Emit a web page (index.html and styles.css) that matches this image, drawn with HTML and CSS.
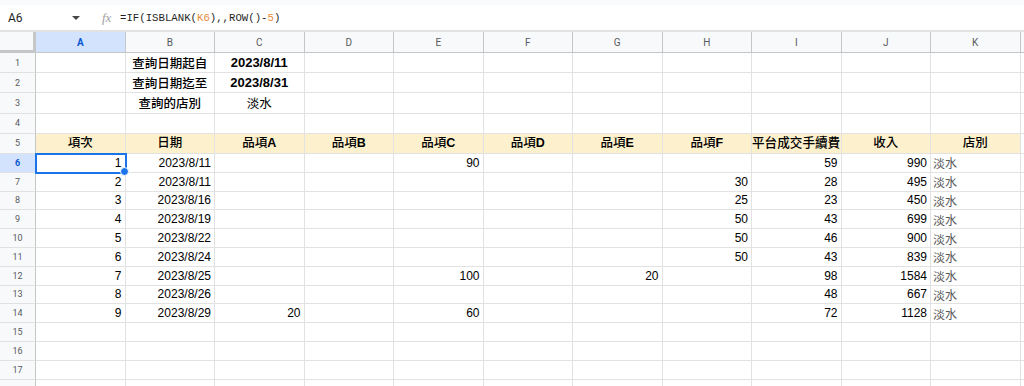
FILE: index.html
```html
<!DOCTYPE html>
<html lang="zh-Hant">
<head>
<meta charset="utf-8">
<title>Sheet</title>
<link rel="stylesheet" href="styles.css">
</head>
<body>
<div class="app">
  <div class="topstrip"></div>
  <div class="fbar">
    <div class="namebox"><span class="ref">A6</span><span class="caret"></span></div>
    <div class="fx">fx</div>
    <div class="formula">=IF(ISBLANK(<span class="f-ref">K6</span>),,ROW()-<span class="f-num">5</span>)</div>
  </div>
  <div class="sheet">
    <div class="row hdr">
      <div class="corner"></div>
      <div class="ch sel">A</div><div class="ch">B</div><div class="ch">C</div><div class="ch">D</div><div class="ch">E</div><div class="ch">F</div><div class="ch">G</div><div class="ch">H</div><div class="ch">I</div><div class="ch">J</div><div class="ch">K</div><div class="ch fill"></div>
    </div>
    <div class="row tall">
      <div class="rh">1</div>
      <div class="c"></div><div class="c ctr">查詢日期起自</div><div class="c ctr b">2023/8/11</div><div class="c"></div><div class="c"></div><div class="c"></div><div class="c"></div><div class="c"></div><div class="c"></div><div class="c"></div><div class="c"></div><div class="c fill"></div>
    </div>
    <div class="row tall">
      <div class="rh">2</div>
      <div class="c"></div><div class="c ctr">查詢日期迄至</div><div class="c ctr b">2023/8/31</div><div class="c"></div><div class="c"></div><div class="c"></div><div class="c"></div><div class="c"></div><div class="c"></div><div class="c"></div><div class="c"></div><div class="c fill"></div>
    </div>
    <div class="row tall">
      <div class="rh">3</div>
      <div class="c"></div><div class="c ctr">查詢的店別</div><div class="c ctr reg">淡水</div><div class="c"></div><div class="c"></div><div class="c"></div><div class="c"></div><div class="c"></div><div class="c"></div><div class="c"></div><div class="c"></div><div class="c fill"></div>
    </div>
    <div class="row tall">
      <div class="rh">4</div>
      <div class="c"></div><div class="c"></div><div class="c"></div><div class="c"></div><div class="c"></div><div class="c"></div><div class="c"></div><div class="c"></div><div class="c"></div><div class="c"></div><div class="c"></div><div class="c fill"></div>
    </div>
    <div class="row tall head5">
      <div class="rh">5</div>
      <div class="c h">項次</div><div class="c h">日期</div><div class="c h">品項<span class="lat">A</span></div><div class="c h">品項<span class="lat">B</span></div><div class="c h">品項<span class="lat">C</span></div><div class="c h">品項<span class="lat">D</span></div><div class="c h">品項<span class="lat">E</span></div><div class="c h">品項<span class="lat">F</span></div><div class="c h nowrap">平台成交手續費</div><div class="c h">收入</div><div class="c h">店別</div><div class="c fill"></div>
    </div>
    <div class="row">
      <div class="rh sel">6</div>
      <div class="c num active">1<span class="handle"></span></div><div class="c num">2023/8/11</div><div class="c"></div><div class="c"></div><div class="c num">90</div><div class="c"></div><div class="c"></div><div class="c"></div><div class="c num">59</div><div class="c num">990</div><div class="c store">淡水</div><div class="c fill"></div>
    </div>
    <div class="row">
      <div class="rh">7</div>
      <div class="c num">2</div><div class="c num">2023/8/11</div><div class="c"></div><div class="c"></div><div class="c"></div><div class="c"></div><div class="c"></div><div class="c num">30</div><div class="c num">28</div><div class="c num">495</div><div class="c store">淡水</div><div class="c fill"></div>
    </div>
    <div class="row">
      <div class="rh">8</div>
      <div class="c num">3</div><div class="c num">2023/8/16</div><div class="c"></div><div class="c"></div><div class="c"></div><div class="c"></div><div class="c"></div><div class="c num">25</div><div class="c num">23</div><div class="c num">450</div><div class="c store">淡水</div><div class="c fill"></div>
    </div>
    <div class="row">
      <div class="rh">9</div>
      <div class="c num">4</div><div class="c num">2023/8/19</div><div class="c"></div><div class="c"></div><div class="c"></div><div class="c"></div><div class="c"></div><div class="c num">50</div><div class="c num">43</div><div class="c num">699</div><div class="c store">淡水</div><div class="c fill"></div>
    </div>
    <div class="row">
      <div class="rh">10</div>
      <div class="c num">5</div><div class="c num">2023/8/22</div><div class="c"></div><div class="c"></div><div class="c"></div><div class="c"></div><div class="c"></div><div class="c num">50</div><div class="c num">46</div><div class="c num">900</div><div class="c store">淡水</div><div class="c fill"></div>
    </div>
    <div class="row">
      <div class="rh">11</div>
      <div class="c num">6</div><div class="c num">2023/8/24</div><div class="c"></div><div class="c"></div><div class="c"></div><div class="c"></div><div class="c"></div><div class="c num">50</div><div class="c num">43</div><div class="c num">839</div><div class="c store">淡水</div><div class="c fill"></div>
    </div>
    <div class="row">
      <div class="rh">12</div>
      <div class="c num">7</div><div class="c num">2023/8/25</div><div class="c"></div><div class="c"></div><div class="c num">100</div><div class="c"></div><div class="c num">20</div><div class="c"></div><div class="c num">98</div><div class="c num">1584</div><div class="c store">淡水</div><div class="c fill"></div>
    </div>
    <div class="row">
      <div class="rh">13</div>
      <div class="c num">8</div><div class="c num">2023/8/26</div><div class="c"></div><div class="c"></div><div class="c"></div><div class="c"></div><div class="c"></div><div class="c"></div><div class="c num">48</div><div class="c num">667</div><div class="c store">淡水</div><div class="c fill"></div>
    </div>
    <div class="row">
      <div class="rh">14</div>
      <div class="c num">9</div><div class="c num">2023/8/29</div><div class="c num">20</div><div class="c"></div><div class="c num">60</div><div class="c"></div><div class="c"></div><div class="c"></div><div class="c num">72</div><div class="c num">1128</div><div class="c store">淡水</div><div class="c fill"></div>
    </div>
    <div class="row">
      <div class="rh">15</div>
      <div class="c"></div><div class="c"></div><div class="c"></div><div class="c"></div><div class="c"></div><div class="c"></div><div class="c"></div><div class="c"></div><div class="c"></div><div class="c"></div><div class="c"></div><div class="c fill"></div>
    </div>
    <div class="row">
      <div class="rh">16</div>
      <div class="c"></div><div class="c"></div><div class="c"></div><div class="c"></div><div class="c"></div><div class="c"></div><div class="c"></div><div class="c"></div><div class="c"></div><div class="c"></div><div class="c"></div><div class="c fill"></div>
    </div>
    <div class="row">
      <div class="rh">17</div>
      <div class="c"></div><div class="c"></div><div class="c"></div><div class="c"></div><div class="c"></div><div class="c"></div><div class="c"></div><div class="c"></div><div class="c"></div><div class="c"></div><div class="c"></div><div class="c fill"></div>
    </div>
    <div class="row">
      <div class="rh"></div>
      <div class="c"></div><div class="c"></div><div class="c"></div><div class="c"></div><div class="c"></div><div class="c"></div><div class="c"></div><div class="c"></div><div class="c"></div><div class="c"></div><div class="c"></div><div class="c fill"></div>
    </div>
  </div>
</div>
</body>
</html>
```

FILE: styles.css
```css
* { box-sizing: border-box; }
html, body { margin: 0; padding: 0; background: #fff; }
body {
  width: 1024px;
  height: 386px;
  overflow: hidden;
  font-family: Arial, "Liberation Sans", "Noto Sans CJK TC", sans-serif;
  color: #000;
}
.app { display: flex; flex-direction: column; }
.topstrip { height: 5px; background: #f9fbfd; }
.fbar {
  height: 27px;
  display: flex;
  align-items: center;
  border-bottom: 2px solid #e1e3e1;
  background: #fff;
}
.namebox {
  width: 90px;
  display: flex;
  align-items: center;
  padding-left: 8px;
  font-family: Roboto, "Liberation Sans", sans-serif;
  font-size: 12px;
  color: #1f1f1f;
}
.namebox .ref { flex: 1; }
.caret {
  width: 0; height: 0;
  border-left: 4px solid transparent;
  border-right: 4px solid transparent;
  border-top: 4px solid #444746;
  margin-right: 10px;
}
.fx {
  width: 30px;
  padding-left: 12px;
  font-family: "Liberation Serif", serif;
  font-style: italic;
  font-size: 13px;
  color: #a0a0a0;
}
.formula {
  font-family: "Liberation Mono", monospace;
  font-size: 10.7px;
  color: #1f1f1f;
}
.f-ref { color: #e98a3c; }
.f-num { color: #e98a3c; }

.sheet { display: flex; flex-direction: column; }
.row {
  display: grid;
  grid-template-columns: 36px repeat(11, 89.5px) 1fr;
  height: 18.8px;
}
.row.hdr { height: 21px; }
.row.tall { height: 20.2px; }

.corner {
  background: #f8f9fa;
  border-right: 3px solid #c4c7c5;
  border-bottom: 3px solid #c4c7c5;
}
.ch {
  background: #f8f9fa;
  border-right: 1px solid #c4c7c5;
  border-bottom: 1px solid #c4c7c5;
  font-family: Roboto, "Liberation Sans", sans-serif;
  font-size: 10px;
  color: #575a5e;
  display: flex;
  align-items: center;
  justify-content: center;
}
.ch.sel { background: #d3e3fd; color: #0b57d0; font-weight: 700; }
.ch.fill { border-right: none; }

.rh {
  background: #f8f9fa;
  border-right: 1px solid #c4c7c5;
  border-bottom: 1px solid #e1e1e1;
  font-family: Roboto, "Liberation Sans", sans-serif;
  font-size: 9px;
  color: #575a5e;
  display: flex;
  align-items: center;
  justify-content: center;
}
.rh.sel { background: #d3e3fd; color: #0b57d0; font-weight: 700; }

.c {
  position: relative;
  border-right: 1px solid #e2e2e2;
  border-bottom: 1px solid #e2e2e2;
  font-size: 12px;
  display: flex;
  align-items: center;
  padding: 0 3px;
  white-space: nowrap;
  overflow: hidden;
}
.c.fill { border-right: none; }
.c.ctr { justify-content: center; font-size: 12.5px; font-weight: 500; }
.c.reg { font-weight: 400; }
.c.b { font-weight: 700; font-size: 13px; }
.c.num { justify-content: flex-end; font-size: 12px; }
.c.store { color: #5a5a5a; font-size: 12px; padding-left: 2px; }

.head5 .c { background: #fdf0cc; }
.head5 .c.fill { background: #fff; }
.c.h {
  display: block;
  text-align: center;
  line-height: 19.2px;
  font-size: 12.5px;
  font-weight: 500;
}
.c.h .lat { font-weight: 700; }
.c.nowrap { padding: 0; text-align: left; font-size: 12.6px; }

.c.active {
  overflow: visible;
  outline: 2px solid #1a73e8;
  outline-offset: -1px;
  z-index: 2;
}
.handle {
  position: absolute;
  right: -4px;
  bottom: -4px;
  width: 7px;
  height: 7px;
  border-radius: 50%;
  background: #1a73e8;
  border: 1px solid #fff;
  box-sizing: content-box;
}
```
